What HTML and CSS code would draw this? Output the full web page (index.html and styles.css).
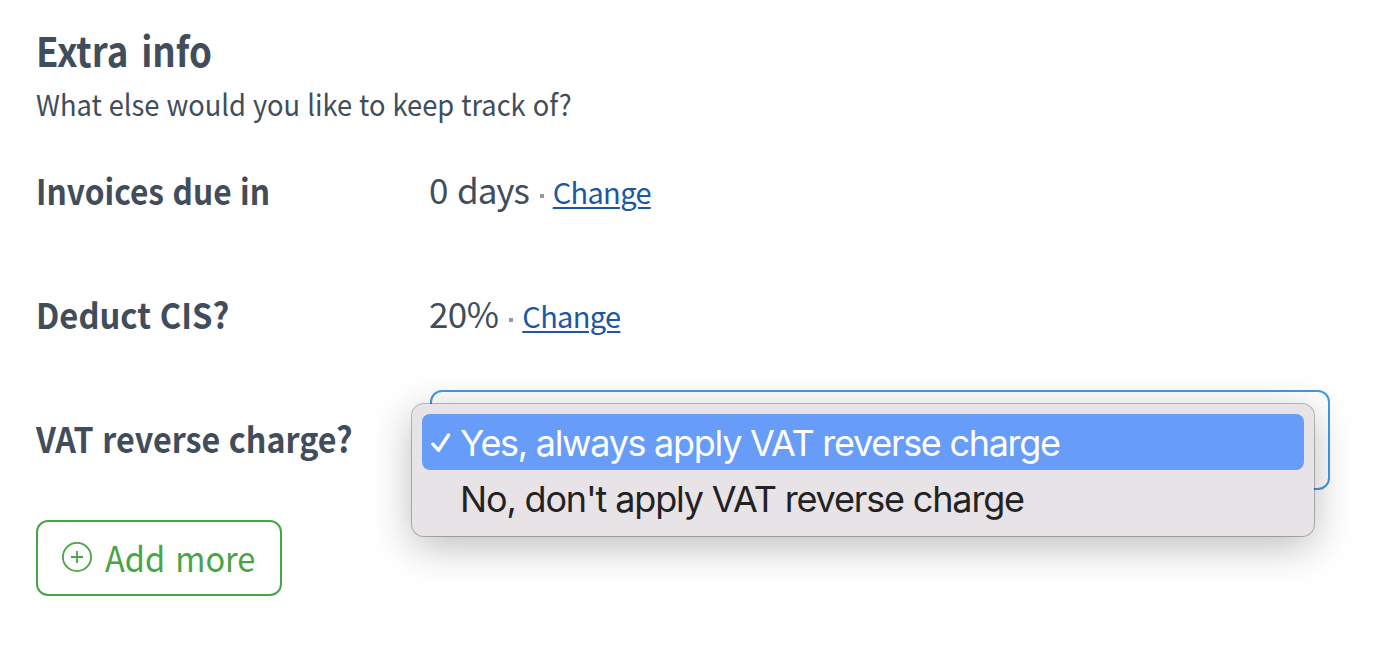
FILE: index.html
```html
<!DOCTYPE html>
<html lang="en">
<head>
    <meta charset="UTF-8">
    <meta name="viewport" content="width=device-width, initial-scale=1.0">
    <title>Extra info</title>
    <link rel="stylesheet" href="styles.css">
</head>
<body>
<main class="extra-info">
    <header class="section-header">
        <h2 class="section-title">Extra info</h2>
        <p class="section-description">What else would you like to keep track of?</p>
    </header>
    <div class="fields">
        <div class="field">
            <span class="field-label label-invoices">Invoices due in</span>
            <div class="field-value">
                <span class="value-text">0 days</span>
                <span class="dot"></span>
                <a href="#" class="change-link">Change</a>
            </div>
        </div>
        <div class="field">
            <span class="field-label label-cis">Deduct CIS?</span>
            <div class="field-value">
                <span class="value-text value-percent">20%</span>
                <span class="dot"></span>
                <a href="#" class="change-link">Change</a>
            </div>
        </div>
        <div class="field">
            <span class="field-label label-vat">VAT reverse charge?</span>
            <div class="select">
                <ul class="select-menu" role="listbox">
                    <li class="option option-active" role="option" aria-selected="true">
                        <svg class="option-check" viewBox="0 0 20 20" aria-hidden="true">
                            <path d="M1.9 11.2 7.5 17.2 17.5 2"/>
                        </svg>
                        <span class="option-text">Yes, always apply VAT reverse charge</span>
                    </li>
                    <li class="option" role="option">
                        <span class="option-text">No, don't apply VAT reverse charge</span>
                    </li>
                </ul>
            </div>
        </div>
    </div>
    <button type="button" class="add-button">
        <svg class="add-icon" viewBox="0 0 30 30" aria-hidden="true">
            <circle cx="15" cy="15" r="14.1"/>
            <path d="M15 9v12M9 15h12"/>
        </svg>
        <span class="add-text">Add more</span>
    </button>
</main>
</body>
</html>
```
FILE: styles.css
```css
:root {
    --text: #414d5a;
    --muted: #929aa2;
    --link: #1d56a5;
    --focus: #4299e6;
    --green: #47a447;
    --menu: #e8e3e7;
    --highlight: #679df9;
}
* {
    margin: 0;
    padding: 0;
    box-sizing: border-box;
}
body {
    background: #fff;
    color: var(--text);
    font-family: "Noto Sans CJK SC", sans-serif;
    overflow: hidden;
}
.extra-info {
    padding: 21px 50px 0 36px;
    white-space: nowrap;
}
.section-header {
    height: 121px;
}
/* headings and labels are set slightly condensed */
.section-title,
.section-description,
.field-label,
.add-text {
    transform-origin: left center;
}
.section-title {
    font-size: 41px;
    font-weight: 700;
    line-height: 56px;
    word-spacing: 5px;
    transform: scaleX(0.895);
}
.section-description {
    padding-top: 1px;
    font-size: 29px;
    line-height: 50px;
    word-spacing: 1px;
    transform: scaleX(0.94);
}
.fields {
    display: flex;
    flex-direction: column;
    gap: 24px;
}
.field {
    display: grid;
    grid-template-columns: 393px 1fr;
    align-items: center;
    height: 100px;
}
.field-label {
    padding-bottom: 5px;
    font-size: 35px;
    font-weight: 700;
    line-height: 50px;
    word-spacing: 1.5px;
}
.label-invoices {
    transform: scaleX(0.905);
}
.label-cis {
    transform: scaleX(0.935);
}
.label-vat {
    transform: scaleX(0.921);
}
.field-value {
    display: flex;
    align-items: baseline;
    padding-bottom: 4px;
    font-size: 35px;
    line-height: 50px;
}
.value-text {
    letter-spacing: -1.1px;
    word-spacing: 3px;
}
.value-percent {
    letter-spacing: -0.6px;
}
.dot {
    width: 4px;
    height: 4px;
    margin: 0 9px 6px 11px;
    background: var(--muted);
    transform: translateY(-6px);
}
.change-link {
    color: var(--link);
    font-size: 29px;
    letter-spacing: -0.67px;
    text-decoration: underline;
    text-decoration-thickness: 2px;
    text-underline-offset: 3px;
}
.select {
    position: relative;
    height: 100px;
    margin-left: 1px;
    border: 2px solid var(--focus);
    border-radius: 12px;
}
.select-menu {
    position: absolute;
    top: 12px;
    left: -20px;
    width: 902px;
    padding: 10px;
    list-style: none;
    background: var(--menu);
    border-radius: 12px;
    box-shadow: 0 0 0 1px rgba(0, 0, 0, 0.25), 0 10px 40px rgba(0, 0, 0, 0.27);
    color: #222;
    font-family: "Inter", sans-serif;
    font-size: 36px;
}
.option {
    display: flex;
    align-items: center;
    height: 56px;
    padding: 2px 0 0 38px;
    border-radius: 8px;
    line-height: 54px;
    letter-spacing: -1.16px;
}
.option-active {
    padding-left: 9px;
    background: var(--highlight);
    color: #fff;
    letter-spacing: -1.29px;
}
.option-check {
    width: 20px;
    height: 20px;
    margin-right: 9px;
    fill: none;
    stroke: currentColor;
    stroke-width: 3.4;
    stroke-linecap: round;
    stroke-linejoin: round;
}
.add-button {
    display: flex;
    align-items: center;
    width: 246px;
    height: 76px;
    margin-top: 30px;
    padding: 0 0 2px 24px;
    background: #fff;
    border: 2px solid var(--green);
    border-radius: 12px;
    color: var(--green);
    font-family: inherit;
    font-size: 35px;
    line-height: 50px;
}
.add-text {
    word-spacing: 3px;
    transform: scaleX(0.93);
}
.add-icon {
    flex: none;
    width: 30px;
    height: 30px;
    margin-right: 13px;
    fill: none;
    stroke: currentColor;
    stroke-width: 1.8;
}
```
